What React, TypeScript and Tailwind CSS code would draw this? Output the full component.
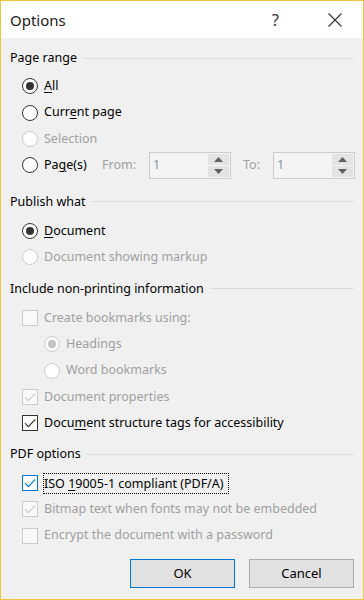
import type { ReactNode } from 'react';

type RowProps = {
  kind: 'radio' | 'check';
  label: ReactNode;
  checked?: boolean;
  disabled?: boolean;
  accent?: boolean;
  focus?: boolean;
  indent?: boolean;
};

function Radio({ checked, disabled }: { checked?: boolean; disabled?: boolean }) {
  return (
    <span className={`flex h-4 w-4 shrink-0 items-center justify-center rounded-full border bg-white ${disabled ? 'border-[#cccccc]' : 'border-[#333333]'}`}>
      {checked && <span className={`h-2 w-2 rounded-full ${disabled ? 'bg-[#c2c2c2]' : 'bg-[#333333]'}`} />}
    </span>
  );
}

function Check({ checked, disabled, accent }: { checked?: boolean; disabled?: boolean; accent?: boolean }) {
  const tone = disabled ? '#cccccc' : accent ? '#0078d7' : '#333333';
  return (
    <span className={`flex h-4 w-4 shrink-0 items-center justify-center border ${disabled ? 'border-[#cccccc] bg-[#f9f9f9]' : accent ? 'border-[#0078d7] bg-white' : 'border-[#333333] bg-white'}`}>
      {checked && (
        <svg width="14" height="14" viewBox="0 0 14 14" fill="none">
          <path d="M2 7.2 L5.4 10.6 L12.2 3.4" stroke={tone} strokeWidth="1.2" />
        </svg>
      )}
    </span>
  );
}

function Row({ kind, label, checked, disabled, accent, focus, indent }: RowProps) {
  return (
    <div className={`flex h-[26.4px] items-center gap-[6px] ${indent ? 'pl-[34px]' : 'pl-[12px]'}`}>
      {kind === 'radio' ? <Radio checked={checked} disabled={disabled} /> : <Check checked={checked} disabled={disabled} accent={accent} />}
      <span className={`${disabled ? 'text-[#a0a0a0]' : 'text-black'} ${focus ? '-ml-[1px] border border-dotted border-black py-[1px] pr-[4px] leading-[17px]' : ''}`}>{label}</span>
    </div>
  );
}

function GroupHeader({ title }: { title: string }) {
  return (
    <div className="flex h-5 items-center gap-[6px] pr-[9px]">
      <span className="text-black">{title}</span>
      <div className="h-px flex-1 bg-[#dcdcdc]" />
    </div>
  );
}

function SpinBox() {
  return (
    <div className="flex h-[27px] w-[82px] border border-[#cccccc] bg-[#f4f4f4]">
      <div className="flex flex-1 items-center pl-[3px] text-[#8a94a0]">1</div>
      <div className="my-[1px] mr-[1px] flex w-[21px] flex-col gap-px">
        <div className="flex flex-1 items-center justify-center bg-[#e3e3e3]">
          <svg width="9" height="5" viewBox="0 0 9 5"><path d="M0 5 L4.5 0 L9 5 Z" fill="#606060" /></svg>
        </div>
        <div className="flex flex-1 items-center justify-center bg-[#e3e3e3]">
          <svg width="9" height="5" viewBox="0 0 9 5"><path d="M0 0 L4.5 5 L9 0 Z" fill="#606060" /></svg>
        </div>
      </div>
    </div>
  );
}

const u = (s: string) => <span className="underline underline-offset-2">{s}</span>;

export default function App() {
  return (
    <div className="flex h-[600px] w-[364px] flex-col border border-[#f0c43c] bg-[#f0f0f0] font-['Noto_Sans',sans-serif] text-[12.5px] text-black">
      <div className="flex h-[37px] shrink-0 items-center bg-white pt-[1px]">
        <span className="pl-[9px] text-[15px] text-[#1a1a1a]">Options</span>
        <span className="ml-auto mr-[49px] text-[16px] text-[#333333]">?</span>
        <svg className="mr-[21px]" width="14" height="14" viewBox="0 0 14 14">
          <path d="M0.5 0.5 L13.5 13.5 M13.5 0.5 L0.5 13.5" stroke="#333333" strokeWidth="1.1" />
        </svg>
      </div>

      <div className="flex flex-1 flex-col pl-[9px] pt-[10px]">
        <GroupHeader title="Page range" />
        <div className="mt-[5px]">
          <Row kind="radio" checked label={<>{u('A')}ll</>} />
          <Row kind="radio" label={<>Curr{u('e')}nt page</>} />
          <Row kind="radio" disabled label="Selection" />
          <div className="flex h-[26.4px] items-center pl-[12px]">
            <Radio />
            <span className="ml-[6px] w-[58px]">Pa{u('g')}e(s)</span>
            <span className="w-[47px] text-[#a0a0a0]">From:</span>
            <SpinBox />
            <span className="ml-[12px] w-[30px] text-[#a0a0a0]">To:</span>
            <SpinBox />
          </div>
        </div>

        <div className="mt-[13.4px]">
          <GroupHeader title="Publish what" />
        </div>
        <div className="mt-[5.8px]">
          <Row kind="radio" checked label={<>{u('D')}ocument</>} />
          <Row kind="radio" disabled label="Document showing markup" />
        </div>

        <div className="mt-[8.4px]">
          <GroupHeader title="Include non-printing information" />
        </div>
        <div className="mt-[5.8px]">
          <Row kind="check" disabled label="Create bookmarks using:" />
          <Row kind="radio" indent checked disabled label="Headings" />
          <Row kind="radio" indent disabled label="Word bookmarks" />
          <Row kind="check" checked disabled label="Document properties" />
          <Row kind="check" checked label={<>Docu{u('m')}ent structure tags for accessibility</>} />
        </div>

        <div className="mt-[8.2px]">
          <GroupHeader title="PDF options" />
        </div>
        <div className="mt-[5px]">
          <Row kind="check" checked accent focus label={<>ISO {u('1')}9005-1 compliant (PDF/A)</>} />
          <Row kind="check" checked disabled label="Bitmap text when fonts may not be embedded" />
          <Row kind="check" disabled label="Encrypt the document with a password" />
        </div>

        <div className="mt-[9.8px] flex justify-end gap-[14px] pr-[9px]">
          <button className="h-[29px] w-[105px] border border-[#0078d7] bg-[#e1e1e1] text-[13px] text-black">OK</button>
          <button className="h-[29px] w-[105px] border border-[#adadad] bg-[#e1e1e1] text-[13px] text-black">Cancel</button>
        </div>
      </div>
    </div>
  );
}
